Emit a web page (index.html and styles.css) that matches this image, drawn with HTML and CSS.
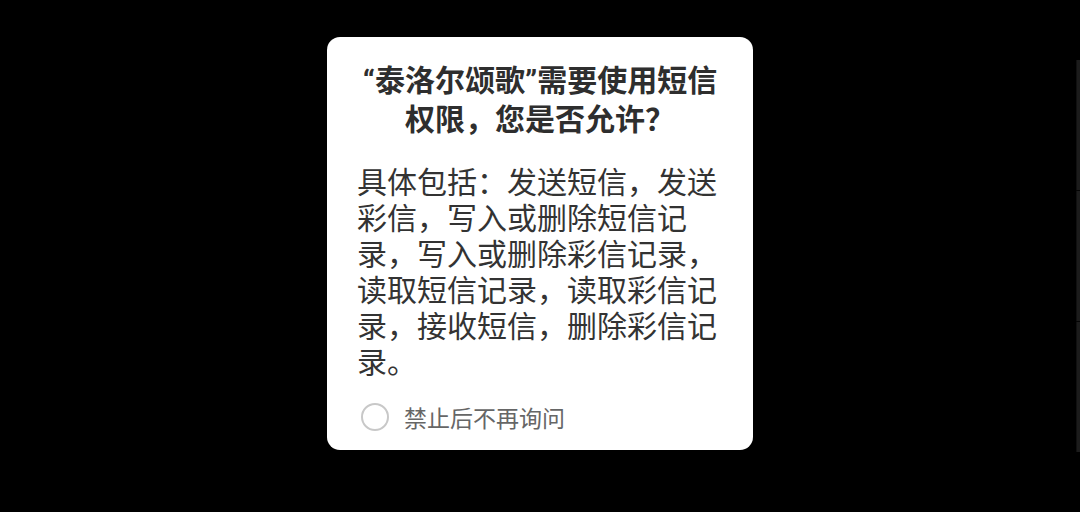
FILE: index.html
```html
<!DOCTYPE html>
<html lang="zh-CN">
<head>
<meta charset="utf-8">
<link rel="stylesheet" href="styles.css">
</head>
<body>
<div class="screen">
  <div class="dialog">
    <h1 class="title"><span class="q">“</span>泰洛尔颂歌<span class="q">”</span>需要使用短信<br>权限，您是否允许？</h1>
    <p class="desc">具体包括：发送短信，发送彩信，写入或删除短信记录，写入或删除彩信记录，读取短信记录，读取彩信记录，接收短信，删除彩信记录。</p>
    <label class="check">
      <span class="circle"></span>
      <span class="check-text">禁止后不再询问</span>
    </label>
  </div>
  <div class="edge">
    <span class="seg"></span>
    <span class="seg"></span>
    <span class="seg"></span>
  </div>
</div>
</body>
</html>
```
FILE: styles.css
```css
html, body {
  margin: 0;
  padding: 0;
  background: #000;
}
body {
  width: 1080px;
  height: 512px;
  overflow: hidden;
  font-family: "Noto Sans CJK SC", "Noto Sans", sans-serif;
}
.screen {
  height: 512px;
  padding-top: 37px;
  box-sizing: border-box;
  display: flex;
  justify-content: center;
  align-items: flex-start;
}
.dialog {
  width: 426px;
  height: 413px;
  box-sizing: border-box;
  background: #fff;
  border-radius: 13px;
  padding: 23px 30px 0 30px;
  display: flex;
  flex-direction: column;
}
.title {
  margin: 0 -20px;
  font-size: 30px;
  line-height: 36px;
  font-weight: 700;
  color: #2e2e2e;
  text-align: center;
}
.q {
  font-family: "Roboto", "Noto Sans", sans-serif;
}
.desc {
  margin: 27px 0 0 0;
  font-size: 30px;
  line-height: 36px;
  color: #333;
  font-weight: 400;
}
.check {
  margin-top: 21px;
  height: 36px;
  display: flex;
  align-items: center;
  padding-left: 4px;
}
.circle {
  width: 24px;
  height: 24px;
  border: 2px solid #c8c8c8;
  border-radius: 50%;
  flex: none;
}
.check-text {
  margin-left: 15px;
  font-size: 23px;
  color: #666;
}
.edge {
  position: fixed;
  right: 0;
  top: 60px;
  width: 4px;
  height: 392px;
  display: flex;
  flex-direction: column;
  gap: 1px;
  background: #050505;
}
.seg {
  flex: 1;
  background: #1c1c1c;
  border-left: 1px solid #101010;
}
```
